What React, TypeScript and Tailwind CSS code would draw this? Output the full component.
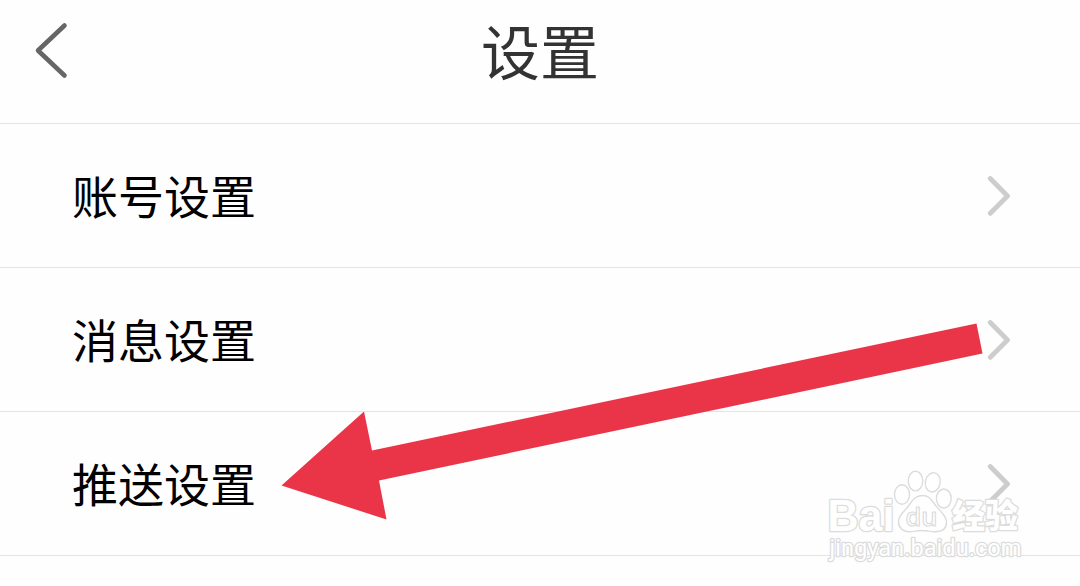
interface ChevronProps {
  className?: string;
}

const rows = [
  { id: 'account', label: '账号设置' },
  { id: 'message', label: '消息设置' },
  { id: 'push', label: '推送设置' },
];

function BackIcon() {
  return (
    <svg
      viewBox="0 0 36 58"
      className="w-9 h-[58px] fill-none stroke-[#666666]"
      strokeWidth="4.6"
      strokeLinecap="round"
      strokeLinejoin="round"
    >
      <path d="M31.5 4.5 L5 29.5 L31.5 54.5" />
    </svg>
  );
}

function Chevron({ className = '' }: ChevronProps) {
  return (
    <svg
      viewBox="0 0 24 42"
      className={`w-6 h-[42px] fill-none stroke-[#cbcecb] ${className}`}
      strokeWidth="4.8"
      strokeLinecap="round"
      strokeLinejoin="round"
    >
      <path d="M3.3 3.5 L20.5 21 L3.3 38.2" />
    </svg>
  );
}

// Red pointer laid over the list
function Arrow() {
  return (
    <svg viewBox="0 0 1080 586" className="absolute inset-0 w-[1080px] h-[586px] pointer-events-none">
      <polygon
        points="281.5,485.5 364,411.5 372,450.5 976.5,323.5 982.5,353.5 379,480.5 386.5,519.5"
        fill="#ea3548"
      />
    </svg>
  );
}

function Watermark() {
  return (
    <svg
      viewBox="820 460 210 110"
      className="absolute left-[820px] top-[460px] w-[210px] h-[110px] pointer-events-none"
      fill="#ffffff"
      stroke="#dcdcdc"
      strokeWidth="1.4"
      strokeLinejoin="round"
    >
      <ellipse cx="902" cy="494.5" rx="7.5" ry="9.7" />
      <ellipse cx="915.5" cy="481" rx="7.2" ry="9.9" />
      <ellipse cx="932.8" cy="482.3" rx="7.4" ry="9.7" transform="rotate(12 932.8 482.3)" />
      <ellipse cx="943.8" cy="498.5" rx="7.4" ry="9.5" />
      <path d="M922.5 495.5 C930 495.5 932 501 936 506 C941 512 946.5 516 946.5 522.5 C946.5 529 941.5 531.7 935 531.7 C930 531.7 927 530.5 922 530.5 C917 530.5 914 531.7 909 531.7 C903 531.7 898.5 528 898.5 521.5 C898.5 515 904 512 908 506.5 C912 501 915 495.5 922.5 495.5 Z" />
      <g style={{ paintOrder: 'stroke' }} strokeWidth="2.6">
        <text x="827.5" y="530.5" fontSize="43.5" fontWeight="700" textLength="67" lengthAdjust="spacingAndGlyphs" className="font-['Liberation_Sans',sans-serif]">
          Bai
        </text>
        <text x="952" y="527.5" fontSize="33" fontWeight="900" textLength="66" lengthAdjust="spacingAndGlyphs" className="font-['Noto_Sans_CJK_SC',sans-serif]">
          经验
        </text>
        <text x="829.5" y="555.5" fontSize="23.5" textLength="192" lengthAdjust="spacingAndGlyphs" className="font-['Roboto',sans-serif]">
          jingyan.baidu.com
        </text>
      </g>
      <text x="905.5" y="526" fontSize="26" textLength="32" lengthAdjust="spacingAndGlyphs" strokeWidth="1.2" className="font-['Open_Sans',sans-serif] font-semibold">
        du
      </text>
    </svg>
  );
}

export default function App() {
  return (
    <div className="relative w-[1080px] h-[586px] overflow-hidden bg-[#fefefe] font-['Noto_Sans_CJK_SC',sans-serif]">
      {/* Header */}
      <header className="grid grid-cols-[1fr_auto_1fr] items-center h-[124px] pb-[15px] border-b border-[#e4e4e4]">
        <button className="justify-self-start ml-[33px] -mt-2">
          <BackIcon />
        </button>
        <h1 className="text-[59px] leading-[60px] text-[#333333] -mt-2">设置</h1>
        <span />
      </header>

      {/* Settings list */}
      <ul>
        {rows.map((row) => (
          <li
            key={row.id}
            className="flex items-center justify-between h-36 pl-[72px] pr-[69px] border-b border-[#e4e4e4]"
          >
            <span className="text-[46px] leading-none text-black pb-[3px]">{row.label}</span>
            <Chevron />
          </li>
        ))}
      </ul>

      <Arrow />
      <Watermark />
    </div>
  );
}
